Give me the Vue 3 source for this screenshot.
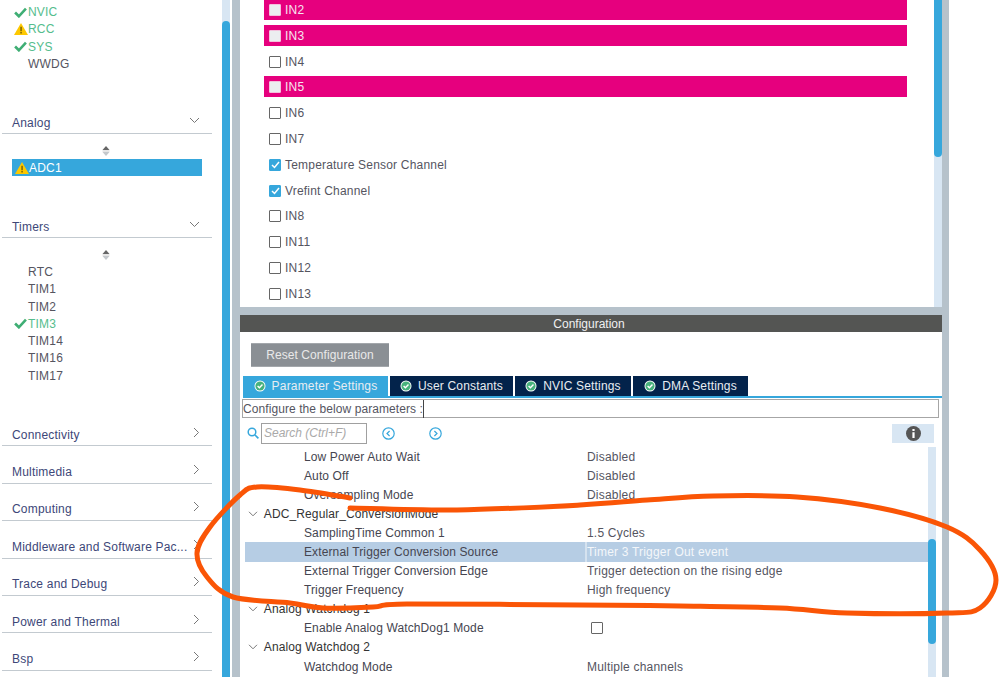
<template>
  <div class="app">
    <!-- left list of peripherals -->
    <aside class="sidebar">
      <div class="top-list">
        <div v-for="item in systemItems" :key="item.name" class="item" :class="item.state">
          <span class="state-icon">
            <svg v-if="item.state === 'ok'" width="13" height="11" viewBox="0 0 12 10"><path d="M1 5l3.5 3.5L11 1.5" fill="none" stroke="#3fae74" stroke-width="2.4" /></svg>
            <svg v-if="item.state === 'warn'" width="14" height="12" viewBox="0 0 13 11"><path d="M6.5 0L13 11H0z" fill="#fdc800" /><path d="M6 3.5h1.1v4H6zM6 8.4h1.1v1.3H6z" fill="#5a4a00" /></svg>
          </span>
          {{ item.name }}
        </div>
      </div>

      <div class="group-head"><span>Analog</span>
        <svg class="chev" width="11" height="7" viewBox="0 0 11 7"><path d="M1 1l4.5 4.5L10 1" fill="none" stroke="#777" stroke-width="1" /></svg>
      </div>
      <div class="group-body analog">
        <svg class="sort" width="8" height="10" viewBox="0 0 8 10"><path d="M4 0l3.5 4H.5z" fill="#666" /><path d="M.5 5h7" stroke="#ccc" /><path d="M4 10L.5 6h7z" fill="#c4c8cc" /></svg>
        <div class="item selected">
          <span class="state-icon">
            <svg width="14" height="12" viewBox="0 0 13 11"><path d="M6.5 0L13 11H0z" fill="#fdc800" /><path d="M6 3.5h1.1v4H6zM6 8.4h1.1v1.3H6z" fill="#5a4a00" /></svg>
          </span>
          ADC1
        </div>
      </div>

      <div class="group-head"><span>Timers</span>
        <svg class="chev" width="11" height="7" viewBox="0 0 11 7"><path d="M1 1l4.5 4.5L10 1" fill="none" stroke="#777" stroke-width="1" /></svg>
      </div>
      <div class="group-body timers">
        <svg class="sort" width="8" height="10" viewBox="0 0 8 10"><path d="M4 0l3.5 4H.5z" fill="#666" /><path d="M.5 5h7" stroke="#ccc" /><path d="M4 10L.5 6h7z" fill="#c4c8cc" /></svg>
        <div v-for="item in timerItems" :key="item.name" class="item" :class="item.state">
          <span class="state-icon">
            <svg v-if="item.state === 'ok'" width="13" height="11" viewBox="0 0 12 10"><path d="M1 5l3.5 3.5L11 1.5" fill="none" stroke="#3fae74" stroke-width="2.4" /></svg>
          </span>
          {{ item.name }}
        </div>
      </div>

      <div v-for="name in closedGroups" :key="name" class="group-head">
        <span>{{ name }}</span>
        <svg class="chev-right" width="7" height="11" viewBox="0 0 7 11"><path d="M1 1l4.5 4.5L1 10" fill="none" stroke="#777" stroke-width="1" /></svg>
      </div>
    </aside>

    <div class="side-scroll"><div class="side-thumb"></div></div>
    <div class="split"></div>

    <main class="main">
      <!-- channel list -->
      <section class="channels">
        <div class="channel-list">
          <div v-for="ch in channels" :key="ch.name" class="channel" :class="{ pink: ch.pink }">
            <span class="box" :class="{ checked: ch.checked }">
              <svg v-if="ch.checked" width="9" height="8" viewBox="0 0 9 8"><path d="M1 4l2.5 2.5L8 1" fill="none" stroke="#fff" stroke-width="1.5" /></svg>
            </span>
            {{ ch.name }}
          </div>
        </div>
        <div class="vscroll"><div class="vthumb"></div></div>
      </section>

      <div class="h-split"></div>
      <div class="config-title">Configuration</div>
      <button class="reset">Reset Configuration</button>

      <div class="tabs">
        <div v-for="(tab, i) in tabs" :key="tab.label" class="tab" :class="{ active: i === 0 }" :style="{ width: tab.width + 'px' }">
          <svg width="12" height="12" viewBox="0 0 12 12"><circle cx="6" cy="6" r="5.5" fill="#fff" /><circle cx="6" cy="6" r="4.6" fill="#47b27c" /><path d="M3.6 6l1.8 1.8L8.5 4.6" fill="none" stroke="#fff" stroke-width="1.4" /></svg>
          {{ tab.label }}
        </div>
      </div>

      <div class="describe"><span>Configure the below parameters :</span></div>

      <div class="tools">
        <svg class="search-icon" width="12" height="12" viewBox="0 0 12 12"><circle cx="5" cy="5" r="3.8" fill="none" stroke="#36a7dc" stroke-width="1.5" /><path d="M8 8l3.4 3.4" stroke="#36a7dc" stroke-width="1.7" /></svg>
        <div class="search">Search (Ctrl+F)</div>
        <svg class="nav-left" width="13" height="13" viewBox="0 0 13 13"><circle cx="6.5" cy="6.5" r="5.7" fill="none" stroke="#36a7dc" stroke-width="1.2" /><path d="M7.6 4L5 6.5 7.6 9" fill="none" stroke="#36a7dc" stroke-width="1.2" /></svg>
        <svg class="nav-right" width="13" height="13" viewBox="0 0 13 13"><circle cx="6.5" cy="6.5" r="5.7" fill="none" stroke="#36a7dc" stroke-width="1.2" /><path d="M5.4 4L8 6.5 5.4 9" fill="none" stroke="#36a7dc" stroke-width="1.2" /></svg>
        <div class="info-box">
          <svg width="15" height="15" viewBox="0 0 15 15"><circle cx="7.5" cy="7.5" r="7.5" fill="#555" /><path d="M6.4 3h2.2v2H6.4zM6.4 6.2h2.2V12H6.4z" fill="#fff" /></svg>
        </div>
      </div>

      <!-- parameter table -->
      <section class="params">
        <div class="param-rows">
          <div v-for="row in rows" :key="row.name" class="row" :class="{ group: row.group, selected: row.selected }">
            <div class="name">
              <svg v-if="row.group" width="10" height="6" viewBox="0 0 10 6"><path d="M1 .8l4 4 4-4" fill="none" stroke="#777" /></svg>
              {{ row.name }}
            </div>
            <div class="value">
              <span v-if="row.box" class="box"></span>
              {{ row.value }}
            </div>
          </div>
        </div>
        <div class="pscroll"><div class="pthumb"></div></div>
      </section>
    </main>

    <div class="split right"></div>

    <!-- hand drawn marker over the screenshot -->
    <svg class="marker" width="999" height="677" viewBox="0 0 999 677">
      <path :d="markerPath" fill="none" stroke="#fa5506" stroke-width="5" stroke-linecap="round" />
    </svg>
  </div>
</template>

<script setup>
const systemItems = [
  { name: 'NVIC', state: 'ok' },
  { name: 'RCC', state: 'warn' },
  { name: 'SYS', state: 'ok' },
  { name: 'WWDG', state: '' }
]

const timerItems = [
  { name: 'RTC', state: '' },
  { name: 'TIM1', state: '' },
  { name: 'TIM2', state: '' },
  { name: 'TIM3', state: 'ok' },
  { name: 'TIM14', state: '' },
  { name: 'TIM16', state: '' },
  { name: 'TIM17', state: '' }
]

const closedGroups = ['Connectivity', 'Multimedia', 'Computing', 'Middleware and Software Pac...', 'Trace and Debug', 'Power and Thermal', 'Bsp']

const channels = [
  { name: 'IN2', pink: true },
  { name: 'IN3', pink: true },
  { name: 'IN4' },
  { name: 'IN5', pink: true },
  { name: 'IN6' },
  { name: 'IN7' },
  { name: 'Temperature Sensor Channel', checked: true },
  { name: 'Vrefint Channel', checked: true },
  { name: 'IN8' },
  { name: 'IN11' },
  { name: 'IN12' },
  { name: 'IN13' }
]

const tabs = [
  { label: 'Parameter Settings', width: 145 },
  { label: 'User Constants', width: 123 },
  { label: 'NVIC Settings', width: 116 },
  { label: 'DMA Settings', width: 115 }
]

const rows = [
  { name: 'Low Power Auto Wait', value: 'Disabled' },
  { name: 'Auto Off', value: 'Disabled' },
  { name: 'Oversampling Mode', value: 'Disabled' },
  { name: 'ADC_Regular_ConversionMode', group: true },
  { name: 'SamplingTime Common 1', value: '1.5 Cycles' },
  { name: 'External Trigger Conversion Source', value: 'Timer 3 Trigger Out event', selected: true },
  { name: 'External Trigger Conversion Edge', value: 'Trigger detection on the rising edge' },
  { name: 'Trigger Frequency', value: 'High frequency' },
  { name: 'Analog Watchdog 1', group: true },
  { name: 'Enable Analog WatchDog1 Mode', box: true },
  { name: 'Analog Watchdog 2', group: true },
  { name: 'Watchdog Mode', value: 'Multiple channels' }
]

// points of the orange circle, smoothed into a curve below
const markerPoints = [
  [350, 508], [457, 510], [580, 505], [647, 500], [713, 496], [797, 497], [880, 508], [947, 527],
  [980, 550], [996, 580], [980, 608], [947, 613], [847, 613], [780, 608], [680, 606], [580, 605],
  [407, 604], [373, 607], [323, 608], [290, 603], [233, 597], [207, 577], [197, 553], [210, 527],
  [240, 495], [257, 487], [300, 490], [350, 498]
]

const markerPath = markerPoints.reduce((d, p, i, pts) => {
  if (i === 0) return `M${p[0]} ${p[1]}`
  const a = pts[Math.max(i - 2, 0)]
  const b = pts[i - 1]
  const c = pts[Math.min(i + 1, pts.length - 1)]
  const c1 = [b[0] + (p[0] - a[0]) / 6, b[1] + (p[1] - a[1]) / 6]
  const c2 = [p[0] - (c[0] - b[0]) / 6, p[1] - (c[1] - b[1]) / 6]
  return `${d} C${c1[0]} ${c1[1]} ${c2[0]} ${c2[1]} ${p[0]} ${p[1]}`
}, '')
</script>

<style>
body {
  background: #fff;
}
</style>

<style scoped>
.app {
  position: relative;
  display: flex;
  width: 999px;
  height: 677px;
  overflow: hidden;
  background: #fff;
  font-family: "Liberation Sans", Arial, sans-serif;
  font-size: 12px;
  letter-spacing: 0.2px;
  color: #55555f;
}

/* sidebar */
.sidebar {
  width: 222px;
  flex: none;
}
.top-list {
  height: 97px;
  padding-top: 3.4px;
  box-sizing: border-box;
}
.item {
  display: flex;
  align-items: center;
  height: 17.25px;
  margin-left: 12px;
  width: 190px;
  padding-left: 2px;
  box-sizing: border-box;
}
.state-icon {
  display: flex;
  align-items: center;
  width: 14px;
  flex: none;
}
.item.ok,
.item.warn {
  color: #55bd8d;
}
.item.selected {
  background: #36a7dc;
  color: #fff;
  height: 17px;
  padding-left: 3px;
}
.group-head {
  display: flex;
  align-items: center;
  justify-content: space-between;
  height: 37.4px;
  width: 210px;
  margin-left: 2px;
  padding: 15px 11px 0 10px;
  box-sizing: border-box;
  border-bottom: 1px solid #c3cad0;
  color: #3d4778;
  white-space: nowrap;
}
.chev {
  margin-top: -5px;
  margin-right: 1px;
}
.chev-right {
  margin-top: -5px;
  margin-right: 1px;
  flex: none;
}
.group-body {
  padding-top: 12px;
  box-sizing: border-box;
}
.group-body.analog {
  height: 66.6px;
}
.group-body.timers {
  height: 170.6px;
}
.sort {
  display: block;
  margin: 0 0 3px 102px;
}

.side-scroll {
  width: 8px;
  flex: none;
  margin-right: 2px;
  background: #d8e6f3;
  padding-top: 21px;
}
.side-thumb {
  height: 100%;
  background: #36a7dc;
  border-radius: 4px 4px 0 0;
}
.split {
  width: 8px;
  flex: none;
  background: #b6c2cb;
}
.split.right {
  width: 7px;
}

/* main column */
.main {
  width: 702px;
  flex: none;
  display: flex;
  flex-direction: column;
}
.channels {
  display: flex;
  height: 307px;
  flex: none;
  overflow: hidden;
}
.channel-list {
  width: 694px;
  flex: none;
  margin-top: -1px;
  padding: 0 27px 0 24px;
  box-sizing: border-box;
}
.channel {
  display: flex;
  align-items: center;
  height: 21px;
  margin-bottom: 4.8px;
  padding-left: 5px;
  padding-top: 1px;
  box-sizing: border-box;
}
.channel.pink {
  background: #e6007e;
  color: #f6e6f0;
}
.box {
  display: inline-flex;
  align-items: center;
  justify-content: center;
  width: 12px;
  height: 12px;
  margin-right: 4px;
  border: 1px solid #666;
  border-radius: 1px;
  box-sizing: border-box;
  background: #fff;
}
.channel.pink .box {
  background: #eceef0;
  border-color: #f4c0dc;
}
.box.checked {
  background: #36a7dc;
  border-color: #36a7dc;
}
.vscroll {
  width: 8px;
  background: #d8e6f3;
}
.vthumb {
  height: 157px;
  background: #36a7dc;
  border-radius: 0 0 4px 4px;
}
.h-split {
  height: 8px;
  flex: none;
  background: #b6c2cb;
}
.config-title {
  height: 17px;
  line-height: 19px;
  padding-right: 4px;
  flex: none;
  background: #545553;
  color: #f0f0f0;
  text-align: center;
  letter-spacing: 0;
}
.reset {
  width: 138px;
  height: 24px;
  margin: 11px 0 9px 11px;
  padding: 0;
  flex: none;
  background: #8a8f94;
  border: none;
  border-top: 1px solid #a3a7ab;
  border-bottom: 1px solid #a3a7ab;
  color: #e9e9e9;
  font: inherit;
  letter-spacing: 0.08px;
}
.tabs {
  display: flex;
  gap: 2px;
  height: 22px;
  flex: none;
  margin-left: 3px;
  border-bottom: 2px solid #36a7dc;
  box-sizing: border-box;
}
.tab {
  display: flex;
  align-items: center;
  justify-content: center;
  gap: 6px;
  background: #03234b;
  color: #e8edf2;
  letter-spacing: 0.17px;
}
.tab.active {
  background: #36a7dc;
}
.describe {
  height: 19px;
  flex: none;
  margin: 1px 3px 0 2px;
  border: 1px solid #a6a6a6;
  box-sizing: border-box;
  line-height: 18px;
  letter-spacing: 0.08px;
  padding-left: 0;
}
.describe span {
  display: inline-block;
  border-right: 1px solid #444;
  color: #55555f;
}
.tools {
  display: flex;
  align-items: center;
  height: 22px;
  margin-top: 4px;
  flex: none;
  padding-left: 7px;
}
.search {
  width: 106px;
  height: 21px;
  margin-left: 2px;
  border: 1px solid #a0a0a0;
  box-sizing: border-box;
  line-height: 19px;
  padding-left: 2px;
  color: #a9a9a9;
  font-style: italic;
  letter-spacing: 0;
}
.nav-left {
  margin-left: 15px;
}
.nav-right {
  margin-left: 34px;
}
.info-box {
  display: flex;
  align-items: center;
  justify-content: center;
  width: 42px;
  height: 19px;
  margin-left: 450px;
  background: #d8e6f3;
}
.params {
  display: flex;
  flex: 1;
  min-height: 0;
  margin-top: 3px;
  overflow: hidden;
}
.param-rows {
  width: 683px;
  flex: none;
  margin-left: 5px;
  box-sizing: border-box;
}
.row {
  display: flex;
  align-items: center;
  height: 19.1px;
}
.name {
  width: 340px;
  flex: none;
  padding-left: 59px;
  box-sizing: border-box;
  color: #454550;
  white-space: nowrap;
  letter-spacing: 0.12px;
}
.row.group .name {
  padding-left: 3px;
  color: #333;
}
.row.group svg {
  margin-right: 3px;
  vertical-align: 1px;
}
.value {
  flex: 1;
  height: 100%;
  display: flex;
  align-items: center;
  padding-left: 2px;
  box-sizing: border-box;
  white-space: nowrap;
}
.value .box {
  margin-left: 4px;
}
.row.selected {
  background: #b6cde4;
}
.row.selected .value {
  color: #f4f7fa;
  border-left: 2px solid #d5e2ef;
  padding-left: 0;
}
.pscroll {
  width: 8px;
  flex: none;
  background: #d8e6f3;
  padding-top: 92px;
}
.pthumb {
  height: 105px;
  background: #36a7dc;
  border-radius: 4px;
}

.marker {
  position: absolute;
  top: 0;
  left: 0;
  pointer-events: none;
}
</style>
